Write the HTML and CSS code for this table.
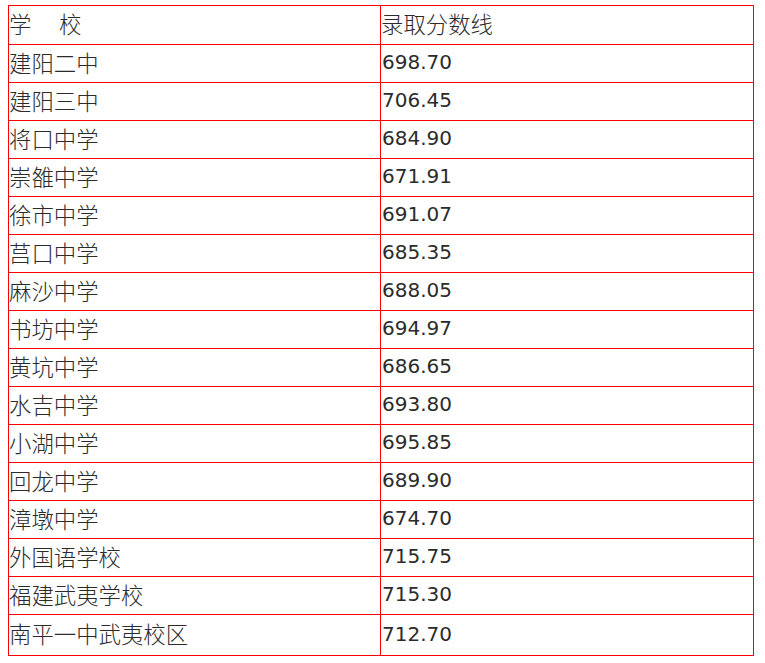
FILE: index.html
```html
<!DOCTYPE html>
<html lang="zh-CN">
<head>
<meta charset="utf-8">
<title>录取分数线</title>
<link rel="stylesheet" href="styles.css">
</head>
<body>
<table class="score-table">
  <colgroup><col class="col-school"><col class="col-score"></colgroup>
  <tr class="row-head"><td class="school"><span class="spaced">学 校</span></td><td class="school">录取分数线</td></tr>
  <tr><td class="school">建阳二中</td><td class="score">698.70</td></tr>
  <tr><td class="school">建阳三中</td><td class="score">706.45</td></tr>
  <tr><td class="school">将口中学</td><td class="score">684.90</td></tr>
  <tr><td class="school">崇雒中学</td><td class="score">671.91</td></tr>
  <tr><td class="school">徐市中学</td><td class="score">691.07</td></tr>
  <tr><td class="school">莒口中学</td><td class="score">685.35</td></tr>
  <tr><td class="school">麻沙中学</td><td class="score">688.05</td></tr>
  <tr><td class="school">书坊中学</td><td class="score">694.97</td></tr>
  <tr><td class="school">黄坑中学</td><td class="score">686.65</td></tr>
  <tr><td class="school">水吉中学</td><td class="score">693.80</td></tr>
  <tr><td class="school">小湖中学</td><td class="score">695.85</td></tr>
  <tr><td class="school">回龙中学</td><td class="score">689.90</td></tr>
  <tr><td class="school">漳墩中学</td><td class="score">674.70</td></tr>
  <tr><td class="school">外国语学校</td><td class="score">715.75</td></tr>
  <tr><td class="school">福建武夷学校</td><td class="score">715.30</td></tr>
  <tr class="row-last"><td class="school">南平一中武夷校区</td><td class="score">712.70</td></tr>
</table>
</body>
</html>
```
FILE: styles.css
```css
html, body {
  margin: 0;
  padding: 0;
  background: #ffffff;
}
body {
  padding: 5px 0 0 8px;
}
.score-table {
  border-collapse: collapse;
  table-layout: fixed;
  width: 745px;
  border: 1px solid #ff0000;
}
.col-school { width: 372px; }
.col-score { width: 373px; }
.score-table td {
  border: 1px solid #ff0000;
  padding: 0 0 3px 0;
  height: 34px;
  vertical-align: middle;
  color: #2b2b2b;
  white-space: nowrap;
}
.row-head td { height: 35px; }
.row-last td { height: 37px; }
.school {
  font-family: "Noto Sans CJK SC", "Noto Sans", sans-serif;
  font-size: 22.4px;
  font-weight: 300;
  line-height: 1;
}
.score-table td.score {
  font-family: "DejaVu Sans", "Noto Sans CJK SC", sans-serif;
  font-size: 20px;
  line-height: 1;
  padding-left: 1px;
}
.spaced {
  word-spacing: 22.6px;
}
```
